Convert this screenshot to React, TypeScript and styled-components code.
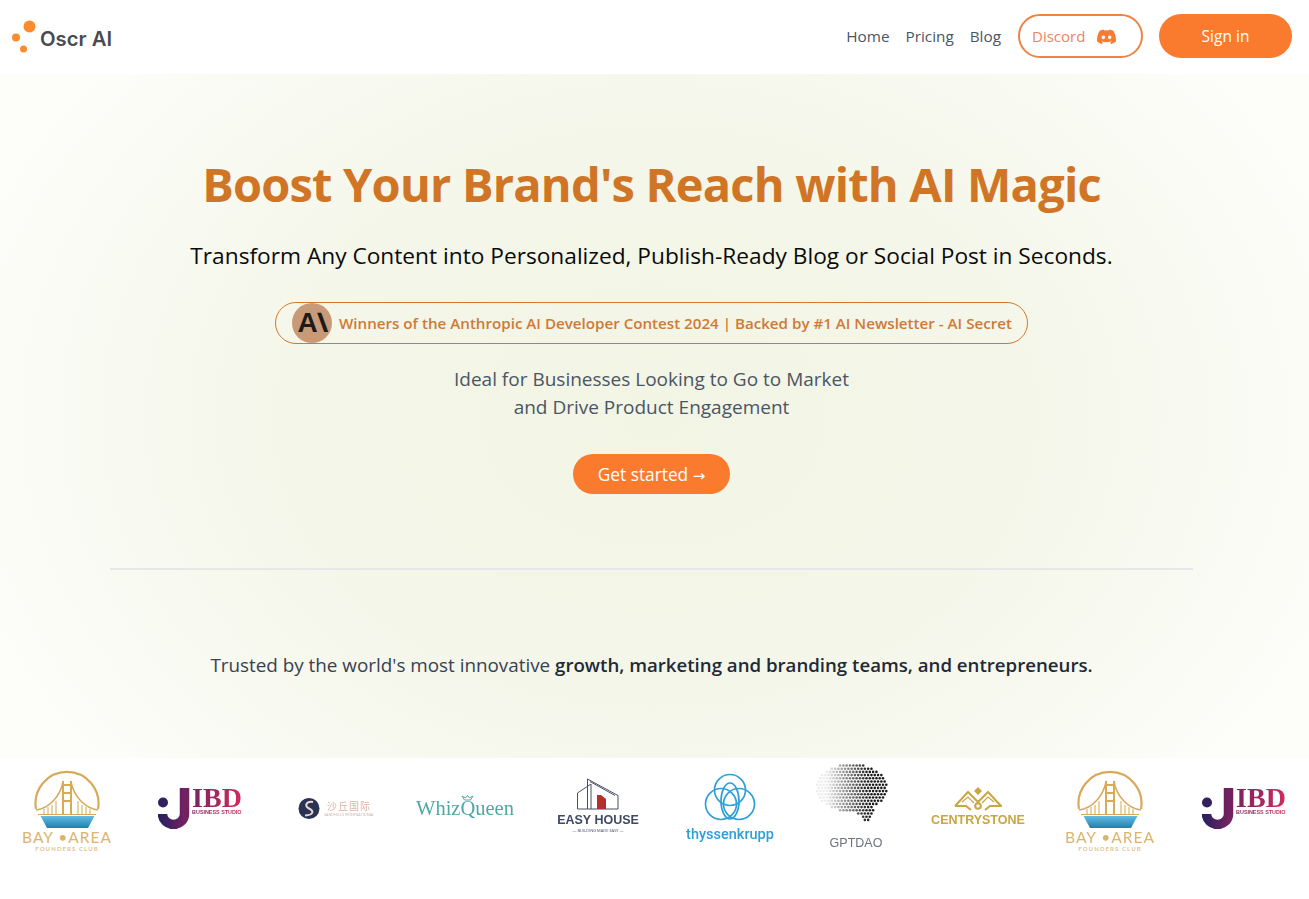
import styled, { createGlobalStyle } from 'styled-components';

const GlobalStyle = createGlobalStyle`
  html, body {
    margin: 0;
    padding: 0;
    background: #fff;
    font-family: 'Open Sans', 'Noto Sans', sans-serif;
  }
`;

function Dots() {
  return (
    <svg width="25" height="34" viewBox="0 0 25 34">
      <circle cx="17.5" cy="7.5" r="6" fill="#fb8c2e" />
      <circle cx="4" cy="18.5" r="4" fill="#fb8c2e" />
      <circle cx="11.5" cy="30" r="3.5" fill="#fb8c2e" />
    </svg>
  );
}

function DiscordIcon() {
  return (
    <svg width="19" height="15" viewBox="0 0 24 18" fill="#f57c32">
      <path d="M20.3 1.5A19.8 19.8 0 0 0 15.4 0l-.6 1.3a18.3 18.3 0 0 0-5.5 0L8.6 0a19.7 19.7 0 0 0-4.9 1.5C.6 6.2-.3 10.8.1 15.3A19.9 19.9 0 0 0 6.2 18.4l1.3-2.1c-.7-.3-1.4-.6-2-1l.5-.4a14.2 14.2 0 0 0 12 0l.5.4c-.6.4-1.3.7-2 1l1.3 2.1a19.8 19.8 0 0 0 6.1-3.1c.5-5.2-.9-9.8-3.6-13.8zM8 12.5c-1.2 0-2.2-1.1-2.2-2.4S6.800 7.700 8 7.700s2.200 1.100 2.200 2.400-1 2.400-2.200 2.400zm8 0c-1.200 0-2.200-1.100-2.200-2.400s1-2.400 2.200-2.400 2.200 1.100 2.200 2.400-1 2.400-2.200 2.400z" />
    </svg>
  );
}

function BayAreaLogo({ id }: { id: string }) {
  return (
    <LogoStack>
      <svg width="66" height="59" viewBox="0 0 66 59" fill="none">
        <defs>
          <linearGradient id={id} x1="0" y1="0" x2="0" y2="1">
            <stop offset="0" stopColor="#63bde3" />
            <stop offset="1" stopColor="#1f7fae" />
          </linearGradient>
        </defs>
        <path d="M2 39A31.500 31.500 0 1 1 64 39" stroke="#d9a95a" strokeWidth="2.2" />
        <path d="M2 40C16 38 26 26 29 12M64 40C50 38 40 26 37 12" stroke="#d9a95a" strokeWidth="1.5" />
        <path d="M29 11V45M37 11V45M29 15H37M29 23H37M29 31H37" stroke="#d9a95a" strokeWidth="2" />
        <path d="M10 39V45M14 37V45M18 35V45M22 31V45M44 31V45M48 35V45M52 37V45M56 39V45" stroke="#dcb36c" strokeWidth="1.2" />
        <path d="M4 44.500H62" stroke="#d9a95a" strokeWidth="1.2" />
        <path d="M6.500 46H60.500L54 58H13z" fill={`url(#${id})`} />
      </svg>
      <BayTitle>BAY •AREA</BayTitle>
      <BaySub>FOUNDERS CLUB</BaySub>
    </LogoStack>
  );
}

function IbdLogo({ id }: { id: string }) {
  return (
    <IbdRow>
      <svg width="32" height="41" viewBox="0 0 32 41" fill="none">
        <defs>
          <linearGradient id={id} x1="0" y1="0" x2="1" y2="0">
            <stop offset="0" stopColor="#2f2060" />
            <stop offset="1" stopColor="#74225f" />
          </linearGradient>
        </defs>
        <circle cx="5" cy="14.500" r="5" fill="#33205f" />
        <path d="M4.500 26A11 10.500 0 0 0 26.500 26V0" stroke={`url(#${id})`} strokeWidth="9.500" />
      </svg>
      <IbdText>
        <IbdTitle>IBD</IbdTitle>
        <IbdSub>BUSINESS STUDIO</IbdSub>
      </IbdText>
    </IbdRow>
  );
}

function ShaqiuLogo() {
  return (
    <ShaRow>
      <svg width="22" height="21" viewBox="0 0 22 21">
        <circle cx="11" cy="10.500" r="10.500" fill="#2b3355" />
        <path d="M15 4C8 3 6 8 11 10.500S16 17 7 17.500" stroke="#ecd6cf" strokeWidth="2" fill="none" />
      </svg>
      <ShaText>
        <ShaTitle>沙丘国际</ShaTitle>
        <ShaSub>SANDHILLS INTERNATIONAL</ShaSub>
      </ShaText>
    </ShaRow>
  );
}

function EasyHouseLogo() {
  return (
    <LogoStack>
      <svg width="42" height="32" viewBox="0 0 42 32" fill="none" stroke="#465067" strokeWidth="1">
        <path d="M.5 31V15L14 6V31M10.500 1V31M10.500 1L41 17.500V31H.5" />
        <path d="M13 3.500L38 17.500" />
        <path d="M20 17H24L29 21V31H20z" fill="#b5302a" stroke="none" />
      </svg>
      <EasyTitle>EASY HOUSE</EasyTitle>
      <EasySub>— BUILDING MADE EASY —</EasySub>
    </LogoStack>
  );
}

function ThyssenLogo() {
  return (
    <LogoStack>
      <svg width="52" height="48" viewBox="0 0 52 48" fill="none" stroke="#2f9fd8" strokeWidth="1.700">
        <circle cx="26" cy="17" r="15.500" />
        <circle cx="17" cy="31" r="15.500" />
        <circle cx="35" cy="31" r="15.500" />
        <ellipse cx="26" cy="28" rx="9" ry="18" />
      </svg>
      <ThyssenText>thyssenkrupp</ThyssenText>
    </LogoStack>
  );
}

// hex grid clipped to a rough brain outline, fading out to the left
const brainDots: { x: number; y: number; o: number }[] = [];
for (let row = 0; row < 20; row++) {
  for (let col = 0; col < 22; col++) {
    const x = 2 + col * 3.300 + (row % 2) * 1.650;
    const y = 1.500 + row * 3.200;
    const inHead = ((x - 36) / 36) ** 2 + ((y - 24) / 24) ** 2 < 1;
    const inStem = y >= 44 && x > 38 + (y - 44) * 0.9 && x < 62 - (y - 44) * 0.5;
    if (inHead || inStem) {
      brainDots.push({ x, y, o: Math.min(1, Math.max(0.08, (x - 8) / 46)) });
    }
  }
}

function GptDaoLogo() {
  return (
    <LogoStack>
      <svg width="74" height="65" viewBox="0 0 74 65">
        {brainDots.map((d) => (
          <circle key={`${d.x}-${d.y}`} cx={d.x} cy={d.y} r="1.300" fill="#1c1c1c" opacity={d.o} />
        ))}
      </svg>
      <GptText>GPTDAO</GptText>
    </LogoStack>
  );
}

function CentrystoneLogo() {
  return (
    <LogoStack>
      <svg width="48" height="25" viewBox="0 0 48 25" fill="none" stroke="#c9a543" strokeWidth="2">
        <path d="M1 20L14 6L24 16L34 6L47 20H36L31 24M1 20H12L17 24" />
        <path d="M8 16L14 11L20 17M40 16L34 11L28 17" strokeWidth="1.200" />
        <path d="M24 1L28 5L24 9L20 5z" fill="#c9a543" stroke="none" />
        <circle cx="24" cy="20" r="2.800" />
      </svg>
      <CentryText>CENTRYSTONE</CentryText>
    </LogoStack>
  );
}

function App() {
  return (
    <Page>
      <GlobalStyle />
      <TopBar>
        <Brand>
          <Dots />
          <BrandName>Oscr AI</BrandName>
        </Brand>
        <Nav>
          <NavLink>Home</NavLink>
          <NavLink>Pricing</NavLink>
          <BlogLink>Blog</BlogLink>
          <DiscordButton>
            Discord
            <DiscordIcon />
          </DiscordButton>
          <SignInButton>Sign in</SignInButton>
        </Nav>
      </TopBar>

      <Hero>
        <Title>Boost Your Brand's Reach with AI Magic</Title>
        <Subtitle>Transform Any Content into Personalized, Publish-Ready Blog or Social Post in Seconds.</Subtitle>
        <Badge>
          <BadgeAvatar>
            A<SlantedI>I</SlantedI>
          </BadgeAvatar>
          Winners of the Anthropic AI Developer Contest 2024 | Backed by #1 AI Newsletter - AI Secret
        </Badge>
        <Ideal>
          Ideal for Businesses Looking to Go to Market
          <br />
          and Drive Product Engagement
        </Ideal>
        <CtaButton>
          Get started <Arrow>→</Arrow>
        </CtaButton>
        <Divider />
        <Trusted>
          Trusted by the world's most innovative <strong>growth, marketing and branding teams, and entrepreneurs.</strong>
        </Trusted>
      </Hero>

      <LogoStrip>
        <LogoCell $w={134} $dy={3}><BayAreaLogo id="water-a" /></LogoCell>
        <LogoCell $w={132}><IbdLogo id="ibd-a" /></LogoCell>
        <LogoCell $w={140}><ShaqiuLogo /></LogoCell>
        <LogoCell $w={118}>
          <WhizText>
            Whiz
            <CrownQ>
              Q
              <svg width="13" height="6" viewBox="0 0 13 6" fill="none" stroke="#4fa8a6" strokeWidth="1">
                <path d="M1 1L3.500 5H9.500L12 1L8.500 3L6.500 .5L4.500 3z" />
              </svg>
            </CrownQ>
            ueen
          </WhizText>
        </LogoCell>
        <LogoCell $w={148} $dy={-2}><EasyHouseLogo /></LogoCell>
        <LogoCell $w={116}><ThyssenLogo /></LogoCell>
        <LogoCell $w={128}><GptDaoLogo /></LogoCell>
        <LogoCell $w={124} $dy={-1}><CentrystoneLogo /></LogoCell>
        <LogoCell $w={140} $dy={3}><BayAreaLogo id="water-b" /></LogoCell>
        <LogoCell $w={128}><IbdLogo id="ibd-b" /></LogoCell>
      </LogoStrip>
    </Page>
  );
}

export default App;

const Page = styled.div`
  width: 100%;
  height: 899px;
  overflow: hidden;
  background: #fff;
`;

const TopBar = styled.header`
  height: 74px;
  box-sizing: border-box;
  padding: 14px 17px 0 12px;
  display: flex;
  justify-content: space-between;
  align-items: flex-start;
  background: #fff;
`;

const Brand = styled.div`
  display: flex;
  align-items: center;
  gap: 3px;
  margin-top: 5px;
`;

const BrandName = styled.span`
  font-family: Inter, sans-serif;
  font-weight: 600;
  font-size: 20.3px;
  color: #4b4b4f;
  margin-top: 5px;
`;

const Nav = styled.nav`
  display: flex;
  align-items: center;
  height: 44px;
`;

const NavLink = styled.a`
  font-size: 15.3px;
  color: #4b5563;
  margin-right: 16px;
`;

const BlogLink = styled(NavLink)`
  margin-right: 17px;
`;

const DiscordButton = styled.button`
  width: 125px;
  height: 44px;
  box-sizing: border-box;
  border: 2px solid #ee8343;
  border-radius: 22px;
  background: #fff;
  color: #ee8360;
  font-family: inherit;
  font-size: 15px;
  display: flex;
  align-items: center;
  gap: 12px;
  padding: 0 0 0 12px;
  margin-right: 16px;
`;

const SignInButton = styled.button`
  width: 133px;
  height: 44px;
  border: none;
  border-radius: 22px;
  background: #fa7a2e;
  color: #fff;
  font-family: inherit;
  font-size: 15.5px;
`;

const Hero = styled.section`
  height: 684px;
  box-sizing: border-box;
  padding-right: 6px;
  display: flex;
  flex-direction: column;
  align-items: center;
  background: radial-gradient(ellipse 55% 80% at 50% 50%, #f2f4e4 0%, #f4f6e9 45%, #f8f9f0 75%, #fdfdfa 100%);
`;

const Title = styled.h1`
  margin: 77px 0 0;
  font-size: 47px;
  line-height: 66px;
  letter-spacing: -0.8px;
  font-weight: 700;
  color: #d07526;
`;

const Subtitle = styled.p`
  margin: 24px 0 0;
  font-size: 22.7px;
  line-height: 30px;
  color: #0a0a0a;
`;

const Badge = styled.div`
  margin-top: 31px;
  height: 42px;
  box-sizing: border-box;
  width: 753px;
  border: 1px solid #d07a2e;
  border-radius: 21px;
  padding-left: 16px;
  display: flex;
  align-items: center;
  gap: 7px;
  font-size: 15.15px;
  font-weight: 600;
  color: #cf7a35;
  white-space: nowrap;
`;

const BadgeAvatar = styled.div`
  width: 40px;
  height: 40px;
  border-radius: 50%;
  background: #c99a78;
  display: flex;
  align-items: center;
  justify-content: center;
  flex-shrink: 0;
  font-family: 'Liberation Sans', sans-serif;
  font-weight: 700;
  font-size: 28px;
  color: #1d1a18;
`;

const SlantedI = styled.span`
  display: inline-block;
  transform: skewX(20deg);
  margin-left: 1px;
`;

const Ideal = styled.p`
  margin: 21px 0 0;
  font-size: 19px;
  line-height: 28px;
  color: #4b5563;
  text-align: center;
`;

const CtaButton = styled.button`
  margin-top: 33px;
  width: 157px;
  height: 40px;
  border: none;
  border-radius: 20px;
  background: #fa7a2e;
  color: #fff;
  font-family: inherit;
  font-size: 17.3px;
`;

const Arrow = styled.span`
  font-family: 'DejaVu Sans', sans-serif;
  font-size: 15px;
`;

const Divider = styled.hr`
  width: 1083px;
  margin: 74px 0 0;
  border: none;
  border-top: 2px solid #e5e7eb;
`;

const Trusted = styled.p`
  margin: 81px 0 0;
  font-size: 18.85px;
  line-height: 28px;
  color: #374151;
  strong {
    font-size: 18.65px;
    font-weight: 600;
    color: #1f2937;
  }
`;

const LogoStrip = styled.div`
  height: 141px;
  display: flex;
  align-items: flex-start;
  background: #fff;
  filter: blur(0.35px);
`;

const LogoCell = styled.div<{ $w: number; $dy?: number }>`
  width: ${(p) => p.$w}px;
  margin-top: ${(p) => p.$dy ?? 0}px;
  flex-shrink: 0;
  height: 100px;
  display: flex;
  align-items: center;
  justify-content: center;
`;

const LogoStack = styled.div`
  display: flex;
  flex-direction: column;
  align-items: center;
`;

const BayTitle = styled.div`
  font-family: Lato, sans-serif;
  font-size: 15.5px;
  line-height: 15px;
  letter-spacing: 1px;
  margin-top: 1px;
  color: #dcb46c;
  white-space: nowrap;
`;

const BaySub = styled.div`
  font-family: Lato, sans-serif;
  font-size: 6px;
  font-weight: 700;
  line-height: 8px;
  letter-spacing: 1.1px;
  color: #dfc48f;
  white-space: nowrap;
`;

const IbdRow = styled.div`
  display: flex;
  align-items: flex-start;
  gap: 2px;
`;

const IbdText = styled.div`
  background: linear-gradient(90deg, #7a2362, #d42a5a);
  background-clip: text;
  color: transparent;
`;

const IbdTitle = styled.div`
  font-family: 'Liberation Serif', serif;
  font-weight: 700;
  font-size: 28px;
  line-height: 20px;
`;

const IbdSub = styled.div`
  font-family: 'Liberation Sans', sans-serif;
  font-weight: 700;
  font-size: 5.4px;
  line-height: 8px;
  white-space: nowrap;
`;

const ShaRow = styled.div`
  display: flex;
  align-items: center;
  gap: 4px;
`;

const ShaText = styled.div`
  display: flex;
  flex-direction: column;
  align-items: center;
`;

const ShaTitle = styled.div`
  font-family: 'Noto Sans CJK SC', sans-serif;
  font-size: 10px;
  line-height: 12px;
  letter-spacing: 1px;
  color: #d8b5a8;
`;

const ShaSub = styled.div`
  font-size: 3.8px;
  line-height: 5px;
  white-space: nowrap;
  color: #c9b0a8;
`;

const WhizText = styled.div`
  font-family: 'Liberation Serif', serif;
  font-size: 20.5px;
  color: #4fa8a6;
  white-space: nowrap;
`;

const CrownQ = styled.span`
  position: relative;
  svg {
    position: absolute;
    top: -2px;
    left: 1px;
  }
`;

const EasyTitle = styled.div`
  font-family: 'Liberation Sans', sans-serif;
  font-weight: 700;
  font-size: 12.5px;
  line-height: 15px;
  margin-top: 3px;
  color: #3f4a60;
  white-space: nowrap;
`;

const EasySub = styled.div`
  font-size: 4px;
  line-height: 6px;
  color: #3f4a60;
  white-space: nowrap;
`;

const ThyssenText = styled.div`
  font-family: Roboto, sans-serif;
  font-size: 14.5px;
  font-weight: 500;
  line-height: 18px;
  margin-top: 5px;
  color: #2f9fd8;
  white-space: nowrap;
`;

const GptText = styled.div`
  font-family: 'Liberation Sans', sans-serif;
  font-size: 12.5px;
  line-height: 18px;
  margin-top: 5px;
  margin-left: 8px;
  color: #6b7280;
`;

const CentryText = styled.div`
  font-family: 'Liberation Sans', sans-serif;
  font-weight: 700;
  font-size: 12.5px;
  line-height: 16px;
  margin-top: 1px;
  color: #c9a543;
  white-space: nowrap;
`;
